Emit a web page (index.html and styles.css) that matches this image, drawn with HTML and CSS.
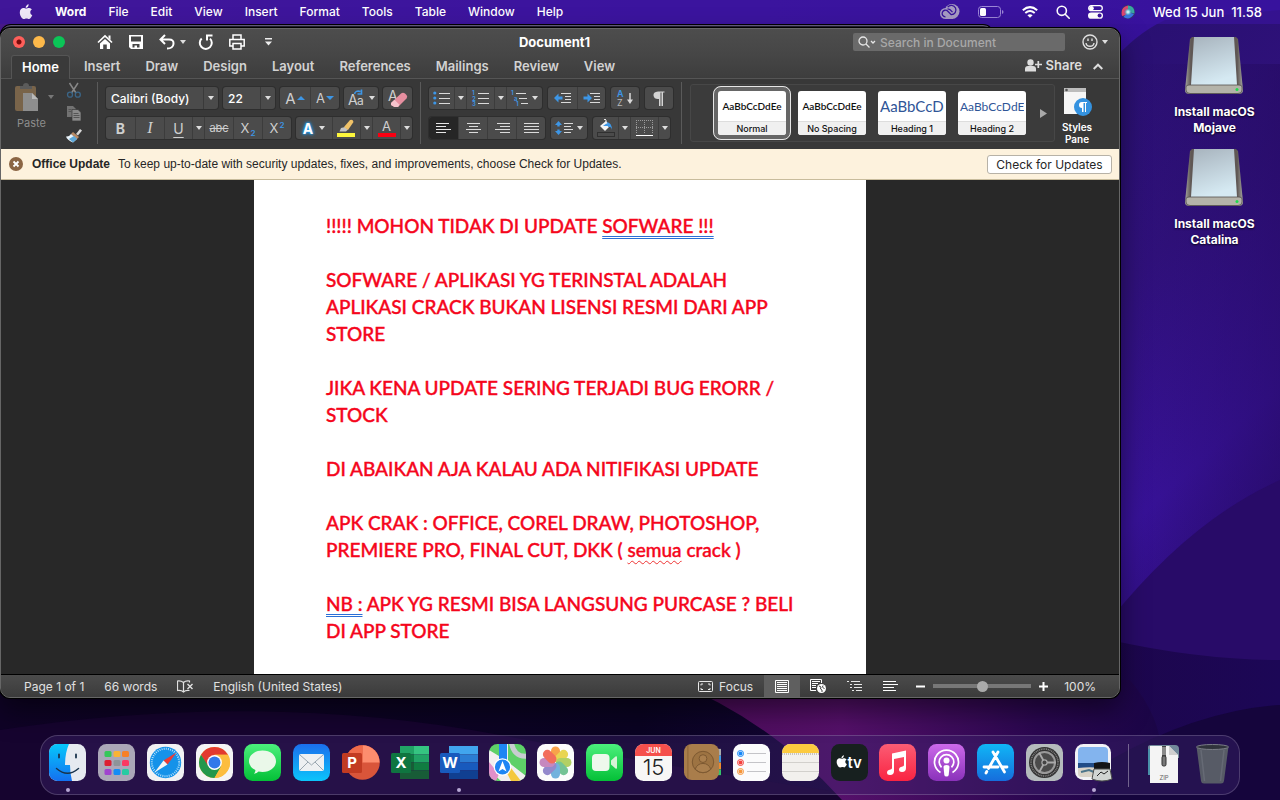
FILE: index.html
```html
<!DOCTYPE html>
<html lang="en">
<head>
<meta charset="utf-8">
<title>Document1</title>
<link rel="stylesheet" href="styles.css">
</head>
<body>
<svg class="wallpaper" viewBox="0 0 1280 800" preserveAspectRatio="none" aria-hidden="true">
  <defs>
    <linearGradient id="w-base" x1="0" y1="0" x2="1" y2="0"><stop offset="0" stop-color="#4a1a8e"/><stop offset=".4" stop-color="#40169c"/><stop offset="1" stop-color="#34109a"/></linearGradient>
    <linearGradient id="w-right" x1="0" y1="0" x2=".2" y2="1"><stop offset="0" stop-color="#281070"/><stop offset=".35" stop-color="#30117c"/><stop offset=".65" stop-color="#38129a"/><stop offset="1" stop-color="#260a66"/></linearGradient>
    <linearGradient id="w-shade" x1="0" y1="0" x2="1" y2="0"><stop offset="0" stop-color="#240a60" stop-opacity="0"/><stop offset="1" stop-color="#240a60" stop-opacity=".55"/></linearGradient>
    <linearGradient id="w-low" x1="0" y1="0" x2="1" y2="0"><stop offset="0" stop-color="#0f0326"/><stop offset=".5" stop-color="#0a0322"/><stop offset=".8" stop-color="#1d0648"/><stop offset="1" stop-color="#1c0756"/></linearGradient>
    <linearGradient id="w-mag" x1="0" y1="0" x2="1" y2="0"><stop offset="0" stop-color="#4c0b58"/><stop offset=".35" stop-color="#55106a"/><stop offset=".75" stop-color="#2a0750"/><stop offset="1" stop-color="#1a0546"/></linearGradient>
  </defs>
  <path fill="url(#w-base)" d="M0 0h1280v800H0z"/>
  <path fill="url(#w-right)" d="M1110 64Q1135 34 1165 20L1280 10V800H1110z"/>
  <path fill="url(#w-shade)" d="M1130 64H1280V800H1130z"/>
  <path fill="#280b68" d="M1110 620Q1190 520 1280 480V800H1110z"/>
  <path fill="url(#w-low)" d="M0 640H1110Q1200 660 1280 660V800H0z"/>
  <path fill="#16042f" d="M0 730Q260 690 500 735T900 800H0z"/>
  <path fill="url(#w-mag)" d="M670 680H1130Q1180 740 1150 800H842Q770 720 670 680z"/>
  <path fill="#15053c" d="M1110 760Q1200 710 1280 705V800H1090z"/>
</svg>

<header class="menubar">
  <nav class="menus" aria-label="Menu bar">
    <button class="menu" aria-label="Apple"><svg width="14" height="16" viewBox="0 0 14 16"><path fill="#eee8f8" d="M9.6.2c.1 1.2-.3 2-.9 2.700-.6.7-1.300 1-2 .9C6.600 2.700 7 2 7.600 1.400 8.200.7 9 .3 9.600.2zM12.900 5.500c-1.200.8-1.700 1.700-1.600 2.900.1 1.300.8 2.200 2 2.700-.8 2.300-2.100 4-3.300 4-.9 0-1.400-.5-2.500-.5s-1.700.5-2.500.5C3.200 15.100.8 11.700.8 8.400c0-2.900 1.700-4.500 3.600-4.500 1.100 0 2 .7 2.800.7s1.700-.8 3.100-.7c1.100.1 2 .6 2.600 1.600z"/></svg></button>
    <button class="menu app">Word</button>
    <button class="menu">File</button>
    <button class="menu">Edit</button>
    <button class="menu">View</button>
    <button class="menu">Insert</button>
    <button class="menu">Format</button>
    <button class="menu">Tools</button>
    <button class="menu">Table</button>
    <button class="menu">Window</button>
    <button class="menu">Help</button>
  </nav>
  <div class="extras">
    <button class="menu" aria-label="Creative Cloud"><svg width="20" height="16" viewBox="0 0 20 16"><circle cx="12" cy="7.500" r="7.500" fill="#a59ac2"/><circle cx="5.500" cy="9.500" r="5.500" fill="#a59ac2"/><path d="M5 8h8v7H5z" fill="#a59ac2"/><g fill="none" stroke="#36139a" stroke-width="1.300"><path d="M5.500 12.800a3.300 3.300 0 1 1 2.300-5.600l3.400 3.400a4.600 4.600 0 1 0-3.500-7.400"/><path d="M7.500 4.800a5 5 0 0 1 3 1.300l2 2"/></g></svg></button>
    <button class="menu" aria-label="Battery"><svg width="26" height="12" viewBox="0 0 26 12"><rect x=".5" y=".5" width="22" height="11" rx="3" fill="none" stroke="#9b86d6"/><rect x="2" y="2" width="6" height="8" rx="1.500" fill="#fff"/><path d="M24 4v4q1.500-.5 1.500-2T24 4z" fill="#9b86d6"/></svg></button>
    <button class="menu" aria-label="Wi-Fi"><svg width="16" height="12" viewBox="0 0 16 12" fill="none" stroke="#fff" stroke-width="2"><path d="M.8 4.200q7.200-6.200 14.400 0M3.300 7q4.700-4 9.400 0"/><path d="M8 11.800L5.400 9.200q2.600-2 5.200 0z" fill="#fff" stroke="none"/></svg></button>
    <button class="menu" aria-label="Spotlight"><svg width="14" height="14" viewBox="0 0 14 14" fill="none" stroke="#fff" stroke-width="1.600"><circle cx="5.800" cy="5.800" r="4.600"/><path d="M9.200 9.200l4 4" stroke-linecap="round"/></svg></button>
    <button class="menu" aria-label="Control Center"><svg width="15" height="14" viewBox="0 0 15 14"><rect x=".7" y=".7" width="13.600" height="5" rx="2.500" fill="none" stroke="#fff" stroke-width="1.300"/><circle cx="3.500" cy="3.200" r="2.300" fill="#fff"/><rect x="0" y="7.500" width="15" height="6.300" rx="3.100" fill="#fff"/><circle cx="11.600" cy="10.600" r="2" fill="#3b149b"/></svg></button>
    <button class="menu" aria-label="Siri"><svg width="14" height="14" viewBox="0 0 14 14"><defs><radialGradient id="siri"><stop offset="0" stop-color="#fff"/><stop offset=".35" stop-color="#8fe0ea" stop-opacity=".9"/><stop offset="1" stop-color="#205a90" stop-opacity="0"/></radialGradient></defs><circle cx="7" cy="7" r="7" fill="#34376a"/><path d="M1 11Q-1 2 7 .5l3 5.500-5 4z" fill="#e0446f"/><path d="M7 .5q7 .5 6.500 8L7 7z" fill="#38a9a0"/><path d="M2.500 12q6 4 10.500-3L7 7z" fill="#3a76e4"/><circle cx="7" cy="7" r="4.500" fill="url(#siri)"/></svg></button>
    <time class="clock">Wed 15 Jun&nbsp; 11.58</time>
  </div>
</header>

<main class="desktop">
  <section class="window" aria-label="Document1">
    <div class="titlebar">
      <div class="tools">
        <div class="lights"><button class="light red" aria-label="Close"></button><button class="light amber" aria-label="Minimize"></button><button class="light green" aria-label="Zoom window"></button></div>
        <div class="quick">
          <button class="icon" aria-label="Home"><svg width="16" height="16" viewBox="0 0 16 16"><path d="M1 8.500l7-6.500 7 6.500" fill="none" stroke="#fff" stroke-width="1.700"/><path d="M11.500 1.500h2V6l-2-2zM3 9.500L8 5l5 4.500V15H9.800v-4.500H6.200V15H3z" fill="#fff"/></svg></button>
          <button class="icon" aria-label="Save"><svg width="16" height="16" viewBox="0 0 16 16"><path d="M1 1h14v14H3l-2-2z" fill="#fff"/><path d="M3 2.500h10v5H3zM4.500 10h7v3.600H9v-2H6.500v2h-2z" fill="#464646"/></svg></button>
          <button class="icon" aria-label="Undo"><svg width="16" height="16" viewBox="0 0 16 16" fill="none" stroke="#fff" stroke-width="2"><path d="M6 1L1.500 5.500 6 10M2 5.500h8q5 0 4.500 4.500T8 14.500"/></svg></button>
          <button class="tiny" aria-label="Undo list"><i class="caret"></i></button>
          <button class="icon" aria-label="Redo"><svg width="16" height="16" viewBox="0 0 16 16" fill="none" stroke="#fff" stroke-width="2"><path d="M3.700 4.500A6 6 0 1 0 12 4.600M9 6.500V1.500h5.500"/></svg></button>
          <button class="icon" aria-label="Print"><svg width="16" height="16" viewBox="0 0 16 16" fill="none" stroke="#fff" stroke-width="1.500"><path d="M4 5V1h8v4M4 12H.8V5.500h14.400V12H12M4 9.500h8V15H4z"/></svg></button>
          <button class="icon" aria-label="Customize toolbar"><svg width="9" height="8" viewBox="0 0 9 8"><path d="M1 0h7v1.500H1zM1 3.500h7L4.500 7.500z" fill="#eee"/></svg></button>
        </div>
      </div>
      <h1 class="title">Document1</h1>
      <div class="find">
        <label class="search"><svg width="19" height="12" viewBox="0 0 19 12" fill="none" stroke="#e6e6e6" stroke-width="1.300"><circle cx="5" cy="5" r="4"/><path d="M8 8l3.500 3.500M13 5l2 2 2-2"/></svg><input type="search" aria-label="Search in Document" placeholder="Search in Document"></label>
        <button class="icon smile" aria-label="Feedback"><svg width="16" height="16" viewBox="0 0 16 16" fill="none" stroke="#e0e0e0" stroke-width="1.400"><circle cx="8" cy="8" r="7"/><path d="M4 9q.5 3.300 4 3.300T12 9M6 4.500v2.500M10 4.500v2.500"/></svg><i class="caret"></i></button>
      </div>
    </div>

    <div class="tabrow">
      <nav class="tabs" aria-label="Ribbon tabs">
        <button class="tab on">Home</button><button class="tab">Insert</button><button class="tab">Draw</button><button class="tab">Design</button><button class="tab">Layout</button><button class="tab">References</button><button class="tab">Mailings</button><button class="tab">Review</button><button class="tab">View</button>
      </nav>
      <div class="share">
        <button class="tab sharebtn"><svg width="17" height="13" viewBox="0 0 17 13"><circle cx="5.500" cy="3.500" r="3.200" fill="#ddd"/><path d="M0 12.500V10q0-3 3-3h5q3 0 3 3v2.500z" fill="#ddd"/><path d="M13.300 2v7M10 5.500h7" stroke="#ddd" stroke-width="1.700"/></svg>Share</button>
        <button class="icon" aria-label="Collapse ribbon"><svg width="10" height="7" viewBox="0 0 10 7" fill="none" stroke="#ddd" stroke-width="2"><path d="M.7 6L5 1.700 9.300 6"/></svg></button>
      </div>
    </div>

    <div class="ribbon">
      <div class="clip">
        <button class="paste"><span class="pasterow"><svg width="24" height="30" viewBox="0 0 24 30"><rect y="4" width="21" height="25" rx="2" fill="#79644a"/><path d="M5 7V4h3q0-3 3-3t3 3h3v3z" fill="#5b5b5b"/><path d="M8 11h9l6 6v12H8z" fill="#8e8e8e"/><path d="M17 11v6h6z" fill="#bababa"/></svg><i class="caret dim"></i></span><span class="pastelabel">Paste</span></button>
        <div class="cliptools">
          <button class="icon" aria-label="Cut"><svg width="16" height="16" viewBox="0 0 16 16" fill="none"><path d="M3.500 1l6.500 10M12 1L5.500 11" stroke="#878787" stroke-width="1.500"/><circle cx="4" cy="12.700" r="2.500" stroke="#3b6688" stroke-width="1.300"/><circle cx="11.800" cy="12.700" r="2.500" stroke="#3b6688" stroke-width="1.300"/></svg></button>
          <button class="icon" aria-label="Copy"><svg width="16" height="16" viewBox="0 0 16 16"><path d="M1 1h6l3 3v8H1z" fill="#727272"/><path d="M6 4.500h6l3 3V16H6z" fill="#8a8a8a" stroke="#383838" stroke-width=".7"/><path d="M7.500 8.500h5M7.500 10.500h6M7.500 12.500h6M2.500 4.500h3M2.500 6.500h3" stroke="#555"/></svg></button>
          <button class="icon" aria-label="Format painter"><svg width="16" height="16" viewBox="0 0 16 16"><path d="M10 6l4-5 2 1.500-4 5z" fill="#d9d9d9"/><path d="M7 4l6 5-2 2-6-5z" fill="#b98b66"/><path d="M5 6l6 5-4 3.500Q1 12 0 8.500 3 9 5 6z" fill="#eaf4fb"/><path d="M3 11l4 3.500L11 11 8 8z" fill="#5ea8d8"/></svg></button>
        </div>
      </div>
      <div class="rule"></div>

      <div class="group">
        <div class="row">
          <label class="combo wide"><select aria-label="Font"><option>Calibri (Body)</option></select><i class="caret"></i></label>
          <label class="combo narrow"><select aria-label="Font size"><option>22</option></select><i class="caret"></i></label>
          <div class="set"><button class="b30 glyph" aria-label="Increase font size"><span class="a16">A</span><svg width="8" height="4" viewBox="0 0 8 4"><path d="M0 4L4 0l4 4z" fill="#3d96e6"/></svg></button><button class="b29 glyph" aria-label="Decrease font size"><span class="a14">A</span><svg width="8" height="4" viewBox="0 0 8 4"><path d="M0 0h8L4 4z" fill="#3d96e6"/></svg></button></div>
          <div class="set"><button class="b34" aria-label="Change case"><svg width="17" height="18" viewBox="0 0 17 18"><text x="0" y="16" class="t14">A</text><text x="9" y="16" class="t12">a</text><path d="M6.500 5q1-4 6-2.500M13.500.5V5H9.500" fill="none" stroke="#3d96e6" stroke-width="1.600"/></svg><i class="caret"></i></button></div>
          <div class="set"><button class="b29" aria-label="Clear formatting"><svg width="20" height="20" viewBox="0 0 20 20"><text x="0" y="13" class="t14">A</text><path d="M3 15L13 5.500q2-1.500 4 0l1.500 1.500q1.500 1.500 0 3.500L10 19H6.500L3 17z" fill="#e78fa0"/><path d="M3 15l3.500-3.200 5 5L10 19H6.500L3 17z" fill="#f6c3cc"/></svg></button></div>
        </div>
        <div class="row">
          <div class="set"><button class="b29 glyph bold">B</button><button class="b29 glyph ital">I</button><button class="b28 glyph under">U</button><button class="b12" aria-label="Underline style"><i class="caret"></i></button><button class="b29 glyph strike">abc</button><button class="b29 glyph script">X<sub>2</sub></button><button class="b29 glyph script">X<sup>2</sup></button></div>
          <div class="set"><button class="b36 glyph fx" aria-label="Text effects"><b>A</b><i class="caret"></i></button><button class="b28" aria-label="Highlight"><svg width="19" height="19" viewBox="0 0 19 19"><path d="M4 9l4-1 3 2.500-2 2H2.500z" fill="#c4c4c4"/><path d="M7 8l6-7q3-1 3.500 2L11 11z" fill="#f0c268"/><path d="M0 14h18v4H0z" fill="#fdf63c"/></svg></button><button class="b12" aria-label="Highlight color"><i class="caret"></i></button><button class="b28" aria-label="Font color"><svg width="18" height="19" viewBox="0 0 18 19"><text x="4" y="12" class="t13">A</text><path d="M0 14h18v4H0z" fill="#fa0012"/></svg></button><button class="b12" aria-label="Font color list"><i class="caret"></i></button></div>
        </div>
      </div>
      <div class="rule"></div>

      <div class="group para">
        <div class="row">
          <div class="set"><button class="b25" aria-label="Bullets"><svg width="17" height="14" viewBox="0 0 17 14"><path d="M6 2.500h11M6 7.500h11M6 12.500h11" stroke="#dadada"/><circle cx="1.800" cy="2" r="1.600" fill="#3d96e6"/><circle cx="1.800" cy="7" r="1.600" fill="#3d96e6"/><circle cx="1.800" cy="12" r="1.600" fill="#3d96e6"/></svg></button><button class="b12" aria-label="Bullet styles"><i class="caret"></i></button><button class="b28" aria-label="Numbering"><svg width="17" height="16" viewBox="0 0 17 16"><path d="M6 3.500h11M6 8.500h11M6 13.500h11" stroke="#dadada"/><text x="0" y="5" class="num">1</text><text x="0" y="10.500" class="num">2</text><text x="0" y="16" class="num">3</text></svg></button><button class="b12" aria-label="Numbering styles"><i class="caret"></i></button><button class="b36" aria-label="Multilevel list"><svg width="17" height="16" viewBox="0 0 17 16"><path d="M5 3.500h10M8 8.500h8M10 13.500h7" stroke="#dadada"/><text x="0" y="5" class="num">1</text><text x="3" y="10.500" class="num">a</text><text x="5" y="16" class="num">1</text></svg><i class="caret"></i></button></div>
          <div class="set"><button class="b29" aria-label="Decrease indent"><svg width="17" height="12" viewBox="0 0 17 12"><path d="M7 1.500h10M11 4.500h6M11 7.500h6M7 10.500h10" stroke="#dadada"/><path d="M0 6l4.500-4.500v3h4v3h-4v3z" fill="#3d96e6"/></svg></button><button class="b28" aria-label="Increase indent"><svg width="17" height="12" viewBox="0 0 17 12"><path d="M7 1.500h10M11 4.500h6M11 7.500h6M7 10.500h10" stroke="#dadada"/><path d="M9 6L4.500 1.500v3h-4v3h4v3z" fill="#3d96e6"/></svg></button></div>
          <div class="set"><button class="b28" aria-label="Sort"><svg width="18" height="18" viewBox="0 0 18 18"><text x="1" y="8" class="sa">A</text><text x="1" y="17" class="sz">Z</text><path d="M14 4v9" stroke="#dadada" stroke-width="1.500"/><path d="M11 10.500h6L14 15z" fill="#dadada"/></svg></button></div>
          <div class="set"><button class="b28" aria-label="Show marks"><svg width="12" height="15" viewBox="0 0 12 15"><path d="M5 8Q1 8 .5 4.500T5 .5h6.500v1H10V15H8.500V1.500h-1V15H6V8z" fill="#d4d4d4"/></svg></button></div>
        </div>
        <div class="row">
          <div class="set"><button class="b29 pressed" aria-label="Align left"><svg width="15" height="12" viewBox="0 0 15 12"><path d="M0 1.500h13M0 4.500h10M0 7.500h15M0 10.500h10" stroke="#e6e6e6"/></svg></button><button class="b29" aria-label="Center"><svg width="15" height="12" viewBox="0 0 15 12"><path d="M1 1.500h13M3 4.500h9M0 7.500h15M3 10.500h9" stroke="#dadada"/></svg></button><button class="b29" aria-label="Align right"><svg width="15" height="12" viewBox="0 0 15 12"><path d="M2 1.500h13M5 4.500h10M0 7.500h15M5 10.500h10" stroke="#dadada"/></svg></button><button class="b29" aria-label="Justify"><svg width="15" height="12" viewBox="0 0 15 12"><path d="M0 1.500h15M0 4.500h15M0 7.500h15M0 10.500h15" stroke="#dadada"/></svg></button></div>
          <div class="set"><button class="b36" aria-label="Line spacing"><svg width="18" height="14" viewBox="0 0 18 14"><path d="M9 2.500h9M9 5.500h7M9 8.500h9M9 11.500h7" stroke="#dadada"/><path d="M3.500 0L7 4H4.700v1.500H2.300V4H0zM3.500 14L0 10h2.300V8.500h2.400V10H7z" fill="#3d96e6"/></svg><i class="caret"></i></button></div>
          <div class="set"><button class="b25" aria-label="Shading"><svg width="18" height="20" viewBox="0 0 18 20"><path d="M3 8l6-5 4 5-5 5z" fill="#f3f3f3"/><path d="M10 4q5 1 5 8-1-4-4-3z" fill="#3d96e6"/><path d="M6 8l4-3 2 3z" fill="#3d96e6"/><path d="M9 6V2q-1-2-2 0" fill="none" stroke="#e6e6e6"/><rect x=".5" y="14.500" width="17" height="4" fill="none" stroke="#303030"/></svg></button><button class="b12" aria-label="Shading color"><i class="caret"></i></button><button class="b28" aria-label="Borders"><svg width="17" height="18" viewBox="0 0 17 18"><path d="M.5 1v14M8.500 1v14M16.500 1v14M0 1.500h17M0 8.500h17" stroke="#9a9a9a" stroke-dasharray="1 1"/><path d="M0 16.500h17" stroke="#fff"/></svg></button><button class="b12" aria-label="Border styles"><i class="caret"></i></button></div>
        </div>
      </div>
      <div class="rule"></div>

      <div class="gallery">
        <button class="style picked"><span class="sample">AaBbCcDdEe</span><span class="name">Normal</span></button>
        <button class="style"><span class="sample">AaBbCcDdEe</span><span class="name">No Spacing</span></button>
        <button class="style"><span class="sample h1">AaBbCcDd</span><span class="name">Heading 1</span></button>
        <button class="style"><span class="sample h2">AaBbCcDdEe</span><span class="name">Heading 2</span></button>
        <button class="icon more" aria-label="More styles"><svg width="7" height="9" viewBox="0 0 7 9"><path d="M0 0l7 4.500L0 9z" fill="#a8a8a8"/></svg></button>
      </div>
      <button class="pane"><svg width="29" height="29" viewBox="0 0 29 29"><path d="M1 1h22v26H1z" fill="#f6f6f6"/><path d="M1 1h22v4H1z" fill="#bcbcbc"/><circle cx="3.500" cy="3" r="1.300" fill="#555"/><circle cx="20" cy="20" r="9" fill="#3492e0"/><path d="M19 21q-3 0-3-3t3-3h5v1h-1v9h-1v-9h-1.500v9H19z" fill="#fff"/></svg>Styles<br>Pane</button>
    </div>

    <div class="notice" role="status">
      <button class="icon dismiss" aria-label="Dismiss"><svg width="14" height="14" viewBox="0 0 14 14"><circle cx="7" cy="7" r="7" fill="#8b6544"/><path d="M4.500 4.500l5 5M9.500 4.500l-5 5" stroke="#fff" stroke-width="1.800"/></svg></button>
      <strong>Office Update</strong>
      <span class="msg">To keep up-to-date with security updates, fixes, and improvements, choose Check for Updates.</span>
      <button class="check">Check for Updates</button>
    </div>

    <div class="canvas">
      <article class="page">
        <p>!!!!! MOHON TIDAK DI UPDATE <span class="grammar">SOFWARE !!!</span></p>
        <p>SOFWARE / APLIKASI YG TERINSTAL ADALAH<br>APLIKASI CRACK BUKAN LISENSI RESMI DARI APP<br>STORE</p>
        <p>JIKA KENA UPDATE SERING TERJADI BUG ERORR /<br>STOCK</p>
        <p>DI ABAIKAN AJA KALAU ADA NITIFIKASI UPDATE</p>
        <p>APK CRAK : OFFICE, COREL DRAW, PHOTOSHOP,<br>PREMIERE PRO, FINAL CUT, DKK ( <span class="spell">semua</span> crack )</p>
        <p><span class="grammar">NB :</span> APK YG RESMI BISA LANGSUNG PURCASE ? BELI<br>DI APP STORE</p>
      </article>
    </div>

    <footer class="status">
      <div class="info">
        <button>Page 1 of 1</button>
        <button>66 words</button>
        <button aria-label="Proofing"><svg width="16" height="13" viewBox="0 0 16 13" fill="none" stroke="#e2e2e2"><path d="M6.500 12.500v-10Q4 .5.500 1v9.500q4-.5 6 1.500 2-2 6-1.500M6.500 2.500Q8.500.5 12.500 1v1.500" stroke-width="1.200"/><path d="M10.500 4l5 5M15.500 4l-5 5" stroke-width="1.400"/></svg></button>
        <button>English (United States)</button>
      </div>
      <div class="views">
        <button class="focus"><svg width="15" height="11" viewBox="0 0 15 11" fill="none" stroke="#e8e8e8"><rect x=".5" y=".5" width="14" height="10" rx="1"/><path d="M3 4.500V3h2M10 3h2v1.500M12 7v1.500h-2M5 8.500H3V7"/></svg>Focus</button>
        <button class="view on" aria-label="Print layout"><svg width="14" height="13" viewBox="0 0 14 13" fill="none" stroke="#fff"><path d="M.5.5h13v12H.5zM2 2.500h10M2 4.500h10M2 6.500h10M2 8.500h10M2 10.500h10"/></svg></button>
        <button class="view" aria-label="Web layout"><svg width="16" height="14" viewBox="0 0 16 14" fill="none" stroke="#fff"><path d="M6 11.500H.5v-11h11V4M2 2.500h8M2 4.500h6M2 6.500h4M2 8.500h4"/><circle cx="11.500" cy="9.500" r="4.500" fill="#fff" stroke="none"/><path d="M9 7l2 1-.5 2 1.500 1v2M13 6.500l-.5 1.500 2 2" stroke="#444"/></svg></button>
        <button class="view" aria-label="Outline"><svg width="15" height="11" viewBox="0 0 15 11" stroke="#e8e8e8"><path d="M0 .5h2M4 .5h9M3 3.500h2M7 3.500h8M3 6.500h2M7 6.500h8M5 9.500h2M9 9.500h6"/></svg></button>
        <button class="view" aria-label="Draft"><svg width="15" height="11" viewBox="0 0 15 11" stroke="#fff"><path d="M0 .5h13M0 3.500h15M0 6.500h11M0 9.500h13"/></svg></button>
        <button class="step" aria-label="Zoom out"><svg width="9" height="9" viewBox="0 0 9 9"><path d="M0 3.500h9v2H0z" fill="#fff"/></svg></button>
        <input class="zoom" type="range" aria-label="Zoom" min="0" max="100" value="50">
        <button class="step" aria-label="Zoom in"><svg width="9" height="9" viewBox="0 0 9 9"><path d="M0 3.500h3.500V0h2v3.500H9v2H5.500V9h-2V5.500H0z" fill="#fff"/></svg></button>
        <button class="pct">100%</button>
      </div>
    </footer>
  </section>

  <aside class="drives">
    <svg width="0" height="0" class="defs" aria-hidden="true"><defs>
      <linearGradient id="d-top" x1="0" y1="0" x2=".3" y2="1"><stop offset="0" stop-color="#a7b3bd"/><stop offset="1" stop-color="#d5e9f2"/></linearGradient>
      <linearGradient id="d-side" x1="0" y1="0" x2="1" y2="0"><stop offset="0" stop-color="#a5a5a0"/><stop offset=".1" stop-color="#5f5754"/><stop offset=".9" stop-color="#5f5754"/><stop offset="1" stop-color="#a5a5a0"/></linearGradient>
      <g id="drive"><path d="M7 1h44l2 2 5 51q0 4-4 4H4q-4 0-4-4L5 3z" fill="url(#d-side)"/><path d="M9 1h40l3 48H6z" fill="url(#d-top)"/><path d="M1 51q0-2 3-2h50q3 0 3 2v3q0 3.500-4 3.500H5Q1 57.500 1 54z" fill="#b4b3a9" stroke="#55524f" stroke-width=".8"/><circle cx="52" cy="53.500" r="1.500" fill="#1fdc4c"/></g>
    </defs></svg>
    <button class="drive"><svg width="58" height="58" viewBox="0 0 58 58"><use href="#drive"/></svg>Install macOS<br>Mojave</button>
    <button class="drive"><svg width="58" height="58" viewBox="0 0 58 58"><use href="#drive"/></svg>Install macOS<br>Catalina</button>
  </aside>
</main>

<nav class="dock" aria-label="Dock">
  <div class="apps">
    <button class="app-icon running" aria-label="Finder"><svg viewBox="0 0 37 37"><defs><linearGradient id="g1" x1="0" y1="0" x2="0" y2="1"><stop offset="0" stop-color="#06c8fb"/><stop offset="1" stop-color="#1470f0"/></linearGradient><clipPath id="rr"><rect width="37" height="37" rx="8.500"/></clipPath></defs><g clip-path="url(#rr)"><path fill="#e6eaf0" d="M0 0h37v37H0z"/><path fill="url(#g1)" d="M0 0h20q-4 9-4 21h5q0 8 2 16H0z"/><path d="M10 10.500v3M27 10.500v3" stroke="#19334c" stroke-width="1.800" stroke-linecap="round"/><path d="M7.500 24.500q11 9.500 22 0" fill="none" stroke="#19334c" stroke-width="1.500" stroke-linecap="round"/></g></svg></button>
    <button class="app-icon" aria-label="Launchpad"><svg viewBox="0 0 37 37"><rect width="37" height="37" rx="8.500" fill="#aba7b8"/><g><rect x="6.500" y="7" width="7" height="6" rx="1.500" fill="#35c759"/><rect x="15.500" y="7" width="7" height="6" rx="1.500" fill="#f9b335"/><rect x="24" y="7" width="7" height="6" rx="1.500" fill="#f78027"/><rect x="6.500" y="16" width="7" height="6" rx="1.500" fill="#dc1f32"/><rect x="15.500" y="16" width="7" height="6" rx="1.500" fill="#8d9499"/><rect x="24" y="16" width="7" height="6" rx="1.500" fill="#fb3962"/><rect x="6.500" y="25" width="7" height="6" rx="1.500" fill="#a044ce"/><rect x="15.500" y="25" width="7" height="6" rx="1.500" fill="#158cf5"/><rect x="24" y="25" width="7" height="6" rx="1.500" fill="#27cba2"/></g></svg></button>
    <button class="app-icon" aria-label="Safari"><svg viewBox="0 0 37 37"><rect width="37" height="37" rx="8.500" fill="#f1f1f3"/><circle cx="18.500" cy="18.500" r="15.700" fill="#1592e9"/><circle cx="18.500" cy="18.500" r="13.700" fill="none" stroke="#bce4fb" stroke-width="2" stroke-dasharray=".9 1.250"/><path d="M29.500 8.500L20.500 20.500l-4-4z" fill="#ee3b34"/><path d="M7.500 28.500l9-12 4 4z" fill="#f5f5f5"/></svg></button>
    <button class="app-icon" aria-label="Chrome"><svg viewBox="0 0 37 37"><rect width="37" height="37" rx="8.500" fill="#f4f4f5"/><circle cx="18.500" cy="18.500" r="15.500" fill="#fcbd3e"/><path d="M5 10.800A15.500 15.500 0 0 1 32 10.800H18.500l-7 11.500z" fill="#e23a2f"/><path d="M5 10.800A15.500 15.500 0 0 0 18.500 34L25 22.500l-13-1z" fill="#22974b"/><path d="M18.500 34A15.500 15.500 0 0 0 32 10.800H18.500L25.500 22z" fill="#fcbd3e"/><circle cx="18.500" cy="18.500" r="7.400" fill="#fff"/><circle cx="18.500" cy="18.500" r="6" fill="#3278ea"/></svg></button>
    <button class="app-icon" aria-label="Messages"><svg viewBox="0 0 37 37"><defs><linearGradient id="g2" x1="0" y1="0" x2="0" y2="1"><stop offset="0" stop-color="#4bf07c"/><stop offset="1" stop-color="#04c037"/></linearGradient></defs><rect width="37" height="37" rx="8.500" fill="url(#g2)"/><path d="M18.500 6.500c8 0 13.500 4.700 13.500 10.700s-5.500 10.700-13.500 10.700q-2.200 0-4-.4-1.500 2-4.500 2.300 1.500-1.500 1.400-3.700Q5 22.800 5 17.200C5 11.200 10.500 6.500 18.500 6.500z" fill="#eaf8e9"/></svg></button>
    <button class="app-icon" aria-label="Mail"><svg viewBox="0 0 37 37"><defs><linearGradient id="g3" x1="0" y1="0" x2="0" y2="1"><stop offset="0" stop-color="#1b6eec"/><stop offset="1" stop-color="#0cc5fb"/></linearGradient></defs><rect width="37" height="37" rx="8.500" fill="url(#g3)"/><rect x="6" y="10" width="25" height="17" rx="2" fill="#eef0f2"/><path d="M7 11l11.500 10L30 11M7 26l8-8M30 26l-8-8" fill="none" stroke="#9aa6b0" stroke-width="1"/></svg></button>
    <button class="app-icon" aria-label="PowerPoint"><svg viewBox="0 0 37 37"><circle cx="20.500" cy="18.500" r="17.300" fill="#d9553a"/><path d="M20.500 1.200A17.300 17.300 0 0 1 37.500 18.500h-17z" fill="#fd8d6e"/><path d="M3.500 18.500A17.300 17.300 0 0 1 20.500 1.200v17.300z" fill="#ef6b4b"/><rect x="0" y="9" width="20" height="20" rx="1.500" fill="#c23b22"/><text x="10" y="24" class="off">P</text></svg></button>
    <button class="app-icon" aria-label="Excel"><svg viewBox="0 0 37 37"><path d="M9 2h14v8.500H9z" fill="#21a365"/><path d="M23 2h15v8.500H23z" fill="#35c481"/><path d="M9 10.500h14v8H9z" fill="#0f7c42"/><path d="M23 10.500h15v8H23z" fill="#21a366"/><path d="M9 18.500h14v8H9z" fill="#185c37"/><path d="M23 18.500h15v8H23z" fill="#107c41"/><path d="M9 26.500h29V35H9z" fill="#185c37"/><rect y="9" width="20" height="20" rx="1.500" fill="#0f7540"/><text x="10" y="24" class="off">X</text></svg></button>
    <button class="app-icon running" aria-label="Word"><svg viewBox="0 0 37 37"><path d="M9 2h29v8.500H9z" fill="#41a5ee"/><path d="M9 10.500h29v8H9z" fill="#2b7cd3"/><path d="M9 18.500h29v8H9z" fill="#185abd"/><path d="M9 26.500h29V35H9z" fill="#103f91"/><rect y="9" width="20" height="20" rx="1.500" fill="#185abd"/><text x="10" y="24" class="off">W</text></svg></button>
    <button class="app-icon" aria-label="Maps"><svg viewBox="0 0 37 37"><g clip-path="url(#rr)"><path fill="#5ed068" d="M0 0h37v37H0z"/><path fill="#f1eff0" d="M0 6l10 6v-12h9v18l18 14v5H12L0 26z"/><path fill="#f4c83e" d="M22 37l-4-8 4-5 10 13z"/><path fill="#e18fc9" d="M0 18l10 12-3 7H0z"/><path d="M10 0h8v18h-8z" fill="#1e86f4"/><path d="M22-4Q24 14 39 12" fill="none" stroke="#c8ccd0" stroke-width="5"/><circle cx="13.500" cy="23" r="8.800" fill="#fff"/><circle cx="13.500" cy="23" r="7.600" fill="#1e86f4"/><path d="M13.500 17l4 10.500-4-2.500-4 2.500z" fill="#fff"/></g></svg></button>
    <button class="app-icon" aria-label="Photos"><svg viewBox="0 0 37 37"><rect width="37" height="37" rx="8.500" fill="#fcfcfc"/><g opacity=".85"><rect x="14" y="2.500" width="9" height="15.500" rx="4.500" fill="#f8932c"/><rect x="14" y="2.500" width="9" height="15.500" rx="4.500" fill="#e6cf35" transform="rotate(45 18.500 18.500)"/><rect x="14" y="2.500" width="9" height="15.500" rx="4.500" fill="#a6c94a" transform="rotate(90 18.500 18.500)"/><rect x="14" y="2.500" width="9" height="15.500" rx="4.500" fill="#5dba84" transform="rotate(135 18.500 18.500)"/><rect x="14" y="2.500" width="9" height="15.500" rx="4.500" fill="#5aa6d8" transform="rotate(180 18.500 18.500)"/><rect x="14" y="2.500" width="9" height="15.500" rx="4.500" fill="#8276c4" transform="rotate(225 18.500 18.500)"/><rect x="14" y="2.500" width="9" height="15.500" rx="4.500" fill="#bd74b4" transform="rotate(270 18.500 18.500)"/><rect x="14" y="2.500" width="9" height="15.500" rx="4.500" fill="#f1553f" transform="rotate(315 18.500 18.500)"/></g></svg></button>
    <button class="app-icon" aria-label="FaceTime"><svg viewBox="0 0 37 37"><rect width="37" height="37" rx="8.500" fill="url(#g2)"/><rect x="6" y="10" width="17.500" height="17" rx="4" fill="#edf8ec"/><path d="M25 16.500l4.500-4q1.500-1 1.500 1v10q0 2-1.500 1l-4.500-4z" fill="#d5f3d7"/></svg></button>
    <button class="app-icon" aria-label="Calendar"><svg viewBox="0 0 37 37"><g clip-path="url(#rr)"><path fill="#f8f7f6" d="M0 0h37v37H0z"/><path fill="#f5504c" d="M0 0h37v12H0z"/></g><text x="18.500" y="9" class="mon">JUN</text><text x="18.500" y="31" class="day">15</text></svg></button>
    <button class="app-icon" aria-label="Contacts"><svg viewBox="0 0 38 37"><path d="M34 5h4v7h-4z" fill="#aaa"/><path d="M34 12h4v7h-4z" fill="#3f9ce8"/><path d="M34 19h4v7h-4z" fill="#f08b2e"/><path d="M34 26h4v6h-4z" fill="#35c46a"/><rect width="36" height="37" rx="8" fill="#a97d4b"/><path d="M4 1v35" stroke="#8b6337"/><circle cx="19.500" cy="18.500" r="11" fill="#9d7342" stroke="#7b5730" stroke-width="1"/><circle cx="19.500" cy="15" r="4" fill="#aa7f4e" stroke="#7b5730"/><path d="M11.500 26q2-6 8-6t8 6q-8 7-16 0z" fill="#aa7f4e" stroke="#7b5730"/></svg></button>
    <button class="app-icon" aria-label="Reminders"><svg viewBox="0 0 37 37"><rect width="37" height="37" rx="8.500" fill="#fbfbfc"/><path d="M14 9.500h19M14 18.500h19M14 27.500h19" stroke="#c4c4c8"/><g fill="none" stroke-width="1"><circle cx="7.500" cy="9.500" r="3" stroke="#1687f7"/><circle cx="7.500" cy="18.500" r="3" stroke="#f4403c"/><circle cx="7.500" cy="27.500" r="3" stroke="#f6953a"/></g><circle cx="7.500" cy="9.500" r="2" fill="#1687f7"/><circle cx="7.500" cy="18.500" r="2" fill="#f4403c"/><circle cx="7.500" cy="27.500" r="2" fill="#f6953a"/></svg></button>
    <button class="app-icon" aria-label="Notes"><svg viewBox="0 0 37 37"><g clip-path="url(#rr)"><path fill="#f2f0ed" d="M0 0h37v37H0z"/><path fill="#fcca3f" d="M0 0h37v9H0z"/><path d="M0 10h37" stroke="#9b978f" stroke-dasharray="1 1"/><path d="M0 18.500h37M0 27.500h37" stroke="#d2d0cc"/></g></svg></button>
    <button class="app-icon" aria-label="TV"><svg viewBox="0 0 37 37"><rect width="37" height="37" rx="8.500" fill="#17201f"/><path transform="translate(5 11) scale(.82)" fill="#fff" d="M9.600.2c.1 1.200-.3 2-.9 2.700-.6.7-1.300 1-2 .9C6.600 2.700 7 2 7.600 1.400 8.200.7 9 .3 9.600.2zM12.900 5.500c-1.200.8-1.700 1.700-1.600 2.900.1 1.300.8 2.200 2 2.700-.8 2.300-2.100 4-3.300 4-.9 0-1.400-.5-2.500-.5s-1.700.5-2.500.5C3.200 15.100.8 11.700.8 8.400c0-2.900 1.700-4.500 3.600-4.500 1.100 0 2 .7 2.800.7s1.700-.8 3.100-.7c1.100.1 2 .6 2.600 1.600z"/><text x="16.500" y="24" class="tv">tv</text></svg></button>
    <button class="app-icon" aria-label="Music"><svg viewBox="0 0 37 37"><defs><linearGradient id="g4" x1="0" y1="0" x2="0" y2="1"><stop offset="0" stop-color="#fb5c74"/><stop offset="1" stop-color="#fa2442"/></linearGradient></defs><rect width="37" height="37" rx="8.500" fill="url(#g4)"/><path d="M13 9.500L27 6.500V24q0 4-4 4-3 0-3-2.500 0-2.500 3.500-3 1.500-.2 1.500-1.500V13l-10 2v12q0 4-4 4-3 0-3-2.500 0-2.500 3.500-3 1.500-.2 1.500-1.500z" fill="#fff"/></svg></button>
    <button class="app-icon" aria-label="Podcasts"><svg viewBox="0 0 37 37"><defs><linearGradient id="g5" x1="0" y1="0" x2="0" y2="1"><stop offset="0" stop-color="#cc69ea"/><stop offset="1" stop-color="#8a32ba"/></linearGradient></defs><rect width="37" height="37" rx="8.500" fill="url(#g5)"/><g fill="none" stroke="#fff" stroke-width="1.700"><path d="M12.500 28.500A12 12 0 1 1 24.500 28.500"/><path d="M13.500 23.300A7.300 7.300 0 1 1 23.500 23.300"/></g><circle cx="18.500" cy="16.500" r="3" fill="#fff"/><path d="M15.500 23q0-2 3-2t3 2l-.8 8q-.2 1.500-2.200 1.500T16.300 31z" fill="#fff"/></svg></button>
    <button class="app-icon" aria-label="App Store"><svg viewBox="0 0 37 37"><defs><linearGradient id="g6" x1="0" y1="0" x2="0" y2="1"><stop offset="0" stop-color="#10b6f6"/><stop offset="1" stop-color="#166ddc"/></linearGradient></defs><rect width="37" height="37" rx="8.500" fill="url(#g6)"/><path d="M16 8l11.500 20M21 8l-9.500 16.500M9.800 27.500L9 29M7 23h14M25.500 23H30" stroke="#fff" stroke-width="2.800" stroke-linecap="round"/></svg></button>
    <button class="app-icon" aria-label="System Preferences"><svg viewBox="0 0 37 37"><rect width="37" height="37" rx="8.500" fill="#b5bbbc"/><circle cx="18.500" cy="18.500" r="15.500" fill="#333"/><circle cx="18.500" cy="18.500" r="13.500" fill="none" stroke="#858585" stroke-width="1.500" stroke-dasharray="1 .8"/><circle cx="18.500" cy="18.500" r="10.500" fill="#4b4b4b" stroke="#999" stroke-width="2"/><circle cx="18.500" cy="18.500" r="2.600" fill="#444" stroke="#a9a9a9" stroke-width="1.200"/><path d="M21 18.500h9M17.300 16.300L13 8.500M17.300 20.700L13 28.500" stroke="#a9a9a9" stroke-width="1.800"/></svg></button>
    <button class="app-icon running" aria-label="Preview"><svg viewBox="0 0 37 37"><rect width="36" height="36" rx="8.500" fill="#f2f2f5"/><path d="M3 7q0-4 4-4h22q4 0 4 4v13H3z" fill="#83b4ee"/><path d="M3 19h30v6H3z" fill="#214c87"/><path d="M3 24q15-2 30 1v5q0 3-4 3H7q-4 0-4-3z" fill="#d9d3c8"/><path d="M6 28l8-2 5 2" stroke="#4d758a" stroke-width="2" fill="none"/><path d="M19 19q8-2 16 0v6H19z" fill="#141517"/><path d="M19 25h16l2 10q-10 4-20 0z" fill="#d1d5d3" stroke="#4d4f4d"/><path d="M22 32l4-4 3 2 4-3" stroke="#222" fill="none"/></svg></button>
  </div>
  <div class="divider"></div>
  <div class="files">
    <button class="app-icon" aria-label="Downloads"><svg viewBox="0 0 37 40"><path d="M3 3q0-2 3-2h24q4 0 4 4v9H3z" fill="#71899a"/><path d="M3 5h4v26H3z" fill="#4a91a9"/><path d="M5 2h19l9 9v28H5z" fill="#f4f4f4"/><path d="M24 2v9h9z" fill="#cfcfcf"/><path d="M17 2h4v18h-4z" fill="#444"/><path d="M17 4h4M17 6h4M17 8h4M17 10h4" stroke="#ccc"/><rect x="17" y="12" width="4" height="10" rx="1.500" fill="#777" stroke="#333"/><text x="19" y="36" class="zip">ZIP</text></svg></button>
    <button class="app-icon" aria-label="Trash"><svg viewBox="0 0 37 40"><path d="M2.500 2.500h32L30 37q-.3 2.500-3 2.500H10Q7.300 39.500 7 37z" fill="#575b66"/><path d="M7 6l3.500 31M30 6l-3.500 31" stroke="#666a75" stroke-width="1.500"/><ellipse cx="18.500" cy="3" rx="16" ry="2.500" fill="#30333c" stroke="#7c7e88"/></svg></button>
  </div>
</nav>
</body>
</html>
```
FILE: styles.css
```css
* { box-sizing: border-box; }
body {
  margin: 0;
  height: 100vh;
  min-height: 600px;
  display: flex;
  flex-direction: column;
  overflow: hidden;
  background: #12042e;
  color: #fff;
  font-family: Inter, "Liberation Sans", sans-serif;
  font-size: 13px;
}
button, input, select { font: inherit; color: inherit; }
button { margin: 0; padding: 0; border: 0; background: none; }
svg { display: block; flex: none; }
h1, p { margin: 0; }
.wallpaper { position: absolute; inset: 0; width: 100%; height: 100%; z-index: -1; }

/* menu bar */
.menubar { height: 24px; flex: none; display: flex; justify-content: space-between; align-items: center; padding: 0 18px 0 19px; background: rgba(58, 20, 160, .6); }
.menus { display: flex; align-items: center; gap: 22px; }
.menu { font-size: 12px; font-weight: 500; line-height: 20px; }
.menu.app { font-weight: 700; }
.extras { display: flex; align-items: center; gap: 18px; }
.clock { font-size: 13px; font-weight: 500; }

/* desktop and window */
.desktop { flex: 1; min-height: 0; display: flex; }
.window {
  flex: 1; min-width: 0; margin-top: 4px;
  display: flex; flex-direction: column;
  border: 1px solid #666; border-radius: 10px;
  background: #383838;
  box-shadow: 0 0 0 1px #000, 0 12px 28px rgba(0, 0, 0, .5);
  position: relative;
}
.window::before { content: ""; position: absolute; z-index: -1; left: 0; right: 126px; top: -4px; height: 20px; border-radius: 10px; background: #242030; border-top: 1px solid #675f80; box-shadow: 0 0 0 1px #000; }
.titlebar { height: 26px; flex: none; display: flex; align-items: center; background: linear-gradient(#4d4d4d, #464646); border-radius: 9px 9px 0 0; }
.tools { flex: 1; display: flex; align-items: center; }
.lights { display: flex; gap: 8px; padding-left: 12px; }
.light { width: 12px; height: 12px; border-radius: 50%; }
.red { background: radial-gradient(circle, #7a0a0a 0 2px, #ff5f5a 3px); }
.amber { background: #fdb94a; }
.green { background: #0bc557; }
.quick { display: flex; align-items: center; padding-left: 32px; }
.quick .icon { margin-right: 15px; }
.quick .icon:nth-child(3) { margin-right: 5px; }
.quick .icon:nth-child(6) { margin-right: 19px; }
.quick .icon:last-child { margin-right: 0; }
.tiny { margin-right: 12px; }
.icon { display: flex; align-items: center; justify-content: center; }
.title { text-align: center; font-size: 13px; font-weight: 700; }
.find { flex: 1; display: flex; align-items: center; justify-content: flex-end; padding-right: 11px; gap: 17px; }
.search { width: 212px; height: 18px; display: flex; align-items: center; gap: 3px; padding-left: 5px; background: #6a6a6a; border-radius: 2px; }
.search input { flex: 1; min-width: 0; padding: 0; border: 0; outline: 0; background: none; font-size: 12px; font-weight: 500; }
.search input::placeholder { color: #a8a8a8; opacity: 1; }
.smile { gap: 4px; }
.caret { display: block; flex: none; border: 3px solid transparent; border-top: 4px solid #ddd; border-bottom: 0; }
.caret.dim { border-top-color: #777; }

.tabrow { height: 24px; flex: none; display: flex; justify-content: space-between; background: linear-gradient(#464646, #3d3d3d); border-bottom: 1px solid #555; }
.tabs { display: flex; gap: 3px; padding-left: 10px; }
.tab { height: 24px; padding: 0 11px 2px; font-size: 13px; font-weight: 600; color: #d2d2d2; }
.tab.on { color: #fff; background: #3a3a3a; border: 1px solid #555; border-bottom: 0; padding: 0 10px 2px; border-radius: 3px 3px 0 0; }
.share { display: flex; padding-right: 16px; }
.sharebtn { display: flex; align-items: center; gap: 4px; height: 22px; color: #ddd; }

/* ribbon */
.ribbon { height: 70px; flex: none; display: flex; align-items: center; padding: 0 20px 2px 14px; background: #383838; }
.rule { width: 1px; height: 62px; margin: 0 8px; background: #5a5a5a; flex: none; }
.clip { width: 74px; flex: none; display: flex; justify-content: space-between; }
.paste { display: flex; flex-direction: column; align-items: flex-start; gap: 4px; font-size: 11px; color: #8d8d8d; }
.pasterow { display: flex; align-items: center; gap: 9px; }
.pastelabel { padding-left: 2px; }
.cliptools { display: flex; flex-direction: column; gap: 7px; padding-right: 7px; }
.group { display: flex; flex-direction: column; gap: 8px; flex: none; }
.row { display: flex; gap: 5px; }
.para .row { gap: 6px; }
.set, .combo { display: flex; height: 22px; background: #4b4b4b; border-radius: 3px; box-shadow: 0 0 0 1px #2e2e2e; }
.set svg { overflow: visible; }
.set button { display: flex; align-items: center; justify-content: center; gap: 4px; border-left: 1px solid #3c3c3c; }
.set button:first-child { border-left: 0; }
.combo { align-items: center; padding-right: 4px; }
.combo select { flex: 1; min-width: 0; height: 22px; padding: 0 0 0 5px; appearance: none; border: 0; border-right: 1px solid #3a3a3a; margin-right: 4px; background: none; font-size: 12px; font-weight: 500; }
.wide { width: 112px; }
.narrow { width: 52px; }
.b12 { width: 12px; }
.b25 { width: 25px; }
.b28 { width: 28px; }
.b29 { width: 29px; }
.b30 { width: 30px; }
.b34 { width: 34px; }
.b36 { width: 36px; }
.set .pressed { background: #262626; border-radius: 3px 0 0 3px; }
.glyph { color: #cfcfcf; font-size: 14px; }
.set .glyph { gap: 1px; }
.a16 { font-size: 15px; }
.a14 { font-size: 13px; }
.bold { font-weight: 700; }
.ital { font-family: "Liberation Serif", serif; font-style: italic; font-size: 16px; }
.under { text-decoration: underline; text-underline-offset: 3px; }
.strike { font-size: 11px; text-decoration: line-through; }
.script { font-size: 13px; }
.script sub, .script sup { font-size: 8px; line-height: 8px; color: #3d96e6; font-weight: 600; }
.script sub { align-self: flex-end; padding-bottom: 2px; }
.script sup { align-self: flex-start; padding-top: 4px; }
.set .fx { gap: 6px; }
.fx b { color: #fff; font-size: 14px; text-shadow: 0 0 2px #1d9bf0, 0 0 3px #1d9bf0, 0 0 4px #1d9bf0; }
.t14 { font-size: 14px; fill: #cfcfcf; }
.t13 { font-size: 13px; fill: #cfcfcf; }
.t12 { font-size: 12px; fill: #cfcfcf; }
.num { font-size: 6px; font-weight: 600; fill: #3d96e6; }
.sa { font-size: 9px; font-weight: 600; fill: #3d96e6; }
.sz { font-size: 9px; fill: #bbb; }

.gallery { flex: 1; min-width: 0; height: 58px; display: flex; align-items: center; justify-content: flex-end; gap: 12px; padding-right: 6px; border: 1px solid #474747; border-radius: 3px; background: #3b3b3b; overflow: hidden; }
.style { width: 68px; height: 44px; flex: none; display: flex; flex-direction: column; background: #fff; border-radius: 3px; color: #111; overflow: hidden; }
.picked { outline: 1px solid #e6e6e6; box-shadow: 0 0 0 5px #666; outline-offset: 4px; }
.sample { flex: 1; align-self: stretch; margin: 0 2px; line-height: 31px; font-family: Lato, sans-serif; font-size: 10px; font-weight: 600; white-space: nowrap; overflow: hidden; }
.sample.h1 { font-size: 15px; color: #2f5597; font-weight: 400; text-align: left; }
.sample.h2 { font-size: 12px; color: #2f5597; font-weight: 400; text-align: left; }
.name { align-self: stretch; height: 14px; line-height: 14px; font-size: 9px; font-weight: 500; background: #f0f0f0; border-top: 1px solid #ddd; }
.more { width: 10px; }
.pane { width: 44px; flex: none; display: flex; flex-direction: column; align-items: center; font-size: 10px; font-weight: 600; line-height: 12px; text-align: center; }
.pane svg { margin: 5px 0; }

/* update notice */
.notice { height: 31px; flex: none; display: flex; align-items: center; padding: 0 7px 0 8px; background: #fdf2dd; border-bottom: 1px solid #c8bc9c; color: #262626; font-family: "Liberation Sans", Arial, sans-serif; font-size: 12px; }
.dismiss { margin-right: 9px; }
.notice strong { font-weight: 700; margin-right: 8px; white-space: nowrap; }
.msg { flex: 1; min-width: 0; }
.check { height: 19px; width: 125px; border: 1px solid #b7b2a7; border-radius: 3px; background: #fff; font-family: Inter, sans-serif; font-size: 12px; }

/* document */
.canvas { flex: 1; min-height: 0; display: flex; justify-content: center; background: #282828; overflow: hidden; }
.page { width: 612px; padding: 32px 72px; background: #fff; color: #f5061c; font-family: Lato, "Liberation Sans", sans-serif; font-size: 19px; font-weight: 500; line-height: 27px; white-space: nowrap; -webkit-text-stroke: 0.4px #f5061c; }
.page p { margin-bottom: 27px; }
.grammar { text-decoration: underline double #2a6fd6 1px; text-underline-offset: 3px; }
.spell { text-decoration: underline wavy #e33 1px; text-underline-offset: 3px; }

/* status bar */
.status { height: 23px; flex: none; display: flex; justify-content: space-between; align-items: stretch; padding: 0 23px; border-top: 1px solid #000; border-radius: 0 0 9px 9px; background: linear-gradient(#4b4b4b, #3b3b3b); color: #e0e0e0; font-size: 12px; }
.info { display: flex; gap: 20px; }
.info button, .views button { display: flex; align-items: center; justify-content: center; }
.views { display: flex; align-items: center; }
.views button { height: 22px; }
.views .focus { gap: 6px; margin-right: 11px; }
.view { width: 36px; }
.view.on { background: #5f5f5f; }
.step { width: 25px; }
.zoom { appearance: none; width: 98px; height: 12px; margin: 0; background: linear-gradient(#777, #777) center / 100% 4px no-repeat; }
.zoom::-webkit-slider-thumb { appearance: none; width: 11px; height: 11px; border-radius: 50%; background: #aaa; }
.views .pct { margin-left: 8px; }

/* desktop drives */
.drives { width: 160px; flex: none; padding: 12px 0 0 29px; display: flex; flex-direction: column; align-items: center; gap: 12px; }
.defs { position: absolute; }
.drive { display: flex; flex-direction: column; align-items: center; font-size: 12px; font-weight: 700; line-height: 16px; text-align: center; text-shadow: 0 1px 2px rgba(0, 0, 0, .8); }
.drive svg { margin-bottom: 10px; }

/* dock */
.dock { height: 60px; flex: none; display: flex; margin: 37px 40px 5px; padding: 8px 8px 0; border: 1px solid rgba(255, 255, 255, .18); border-radius: 18px; background: rgba(62, 38, 110, .4); }
.apps { flex: 1; min-width: 0; display: flex; justify-content: space-between; }
.files { display: flex; gap: 12px; }
.divider { width: 1px; height: 43px; margin: 0 16px; background: rgba(255, 255, 255, .35); }
.app-icon { width: 37px; height: 37px; position: relative; }
.app-icon svg { width: 37px; overflow: visible; }
.running::after { content: ""; position: absolute; left: 17px; bottom: -11px; width: 4px; height: 4px; border-radius: 50%; background: #b7a8d4; }
.off { font-size: 15px; font-weight: 700; fill: #fff; text-anchor: middle; }
.mon { font-size: 7px; font-weight: 600; fill: #fff; text-anchor: middle; }
.day { font-size: 22px; font-weight: 300; fill: #222; text-anchor: middle; }
.tv { font-size: 15px; font-weight: 600; fill: #fff; }
.zip { font-size: 6px; fill: #666; text-anchor: middle; }
```
